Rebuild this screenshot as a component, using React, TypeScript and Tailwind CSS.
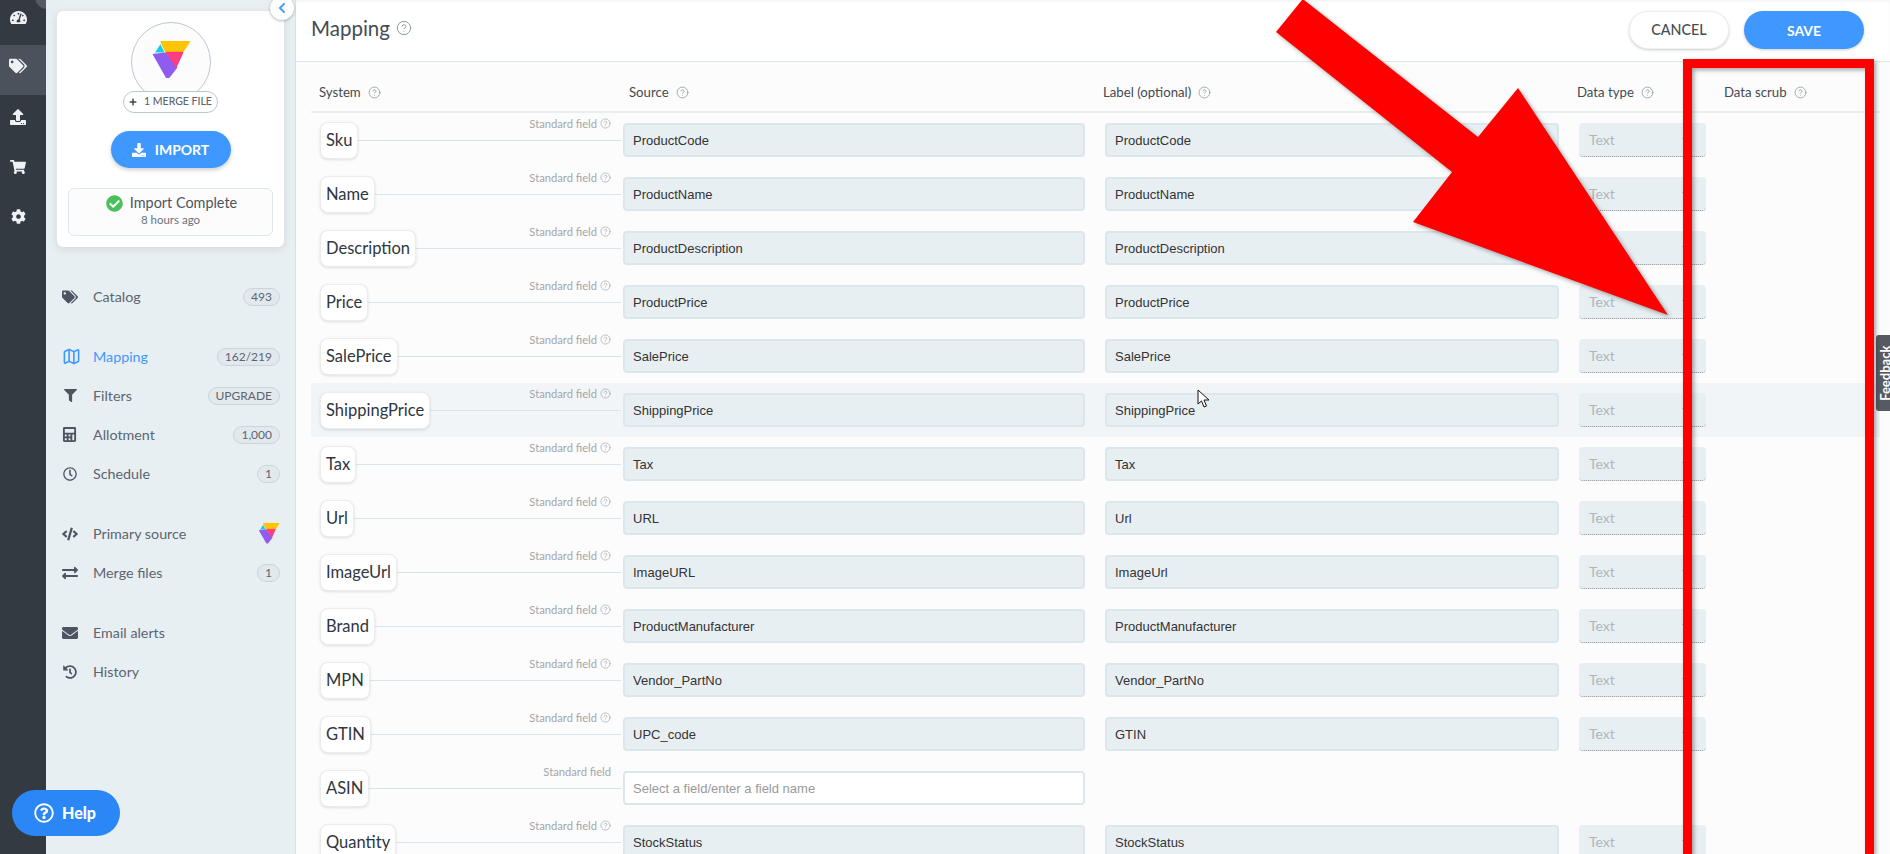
import { CircleHelp, Map as MapIcon } from 'lucide-react';
import {
    FaTachometerAlt, FaTags, FaUpload, FaShoppingCart, FaCog, FaFilter, FaCalculator,
    FaRegClock, FaCode, FaExchangeAlt, FaEnvelope, FaHistory, FaDownload, FaPlus,
    FaCheckCircle, FaChevronLeft, FaRegQuestionCircle,
} from 'react-icons/fa';
import type { ReactNode } from 'react';

const rows = [
    { system: 'Sku', source: 'ProductCode', label: 'ProductCode' },
    { system: 'Name', source: 'ProductName', label: 'ProductName' },
    { system: 'Description', source: 'ProductDescription', label: 'ProductDescription' },
    { system: 'Price', source: 'ProductPrice', label: 'ProductPrice' },
    { system: 'SalePrice', source: 'SalePrice', label: 'SalePrice' },
    { system: 'ShippingPrice', source: 'ShippingPrice', label: 'ShippingPrice', hover: true },
    { system: 'Tax', source: 'Tax', label: 'Tax' },
    { system: 'Url', source: 'URL', label: 'Url' },
    { system: 'ImageUrl', source: 'ImageURL', label: 'ImageUrl' },
    { system: 'Brand', source: 'ProductManufacturer', label: 'ProductManufacturer' },
    { system: 'MPN', source: 'Vendor_PartNo', label: 'Vendor_PartNo' },
    { system: 'GTIN', source: 'UPC_code', label: 'GTIN' },
    { system: 'ASIN' },
    { system: 'Quantity', source: 'StockStatus', label: 'StockStatus' },
];

const Logo = ({ className }: { className: string }) => (
    <svg viewBox="0 0 36 36" className={className}>
        <path d="M8 1 L34 1 L27 11 L13 11 Z" fill="#ffc400" stroke="#ffc400" strokeWidth="2" strokeLinejoin="round" />
        <path d="M7 3 L2 11 L11 11 Z" fill="#12cfe0" />
        <path d="M1 13 L12 12 L22 25 L15 34 L13 34 Z" fill="#8f5cf0" stroke="#8f5cf0" strokeWidth="2" strokeLinejoin="round" />
        <path d="M13 11 L28 11 L22 24 Z" fill="#ff3d7f" stroke="#ff3d7f" strokeWidth="1.5" strokeLinejoin="round" />
    </svg>
);

const NavItem = ({ icon, text, badge, active, className = '' }: { icon: ReactNode; text: string; badge?: ReactNode; active?: boolean; className?: string }) => (
    <div className={`flex h-[39px] items-center pl-[16px] pr-[15px] ${className}`}>
        <span className={`flex w-[31px] shrink-0 items-center ${active ? 'text-[#3f98ff]' : 'text-[#4d5562]'}`}>{icon}</span>
        <span className={`flex-1 text-[14.3px] ${active ? 'text-[#3f98ff]' : 'text-[#5c6570]'}`}>{text}</span>
        {badge}
    </div>
);

const Badge = ({ children }: { children: ReactNode }) => (
    <span className="flex h-[18px] items-center rounded-full border border-[#c9d5dd] bg-[#e2e9ee] px-[7px] text-[12px] text-[#5c6570]">{children}</span>
);

const ColHead = ({ text, className }: { text: string; className: string }) => (
    <div className={`flex items-center gap-[7px] text-[13.2px] text-[#444a52] ${className}`}>
        {text} <CircleHelp size={13} strokeWidth={1.5} className="text-[#8a9a9f]" />
    </div>
);

const Field = ({ text, className }: { text: string; className: string }) => (
    <div className={`flex h-[34px] items-center rounded-[4px] border-2 border-[#dce6ed] bg-[#e8eff3] pl-[8px] pt-[1px] font-['Liberation_Sans',sans-serif] text-[13px] text-[#333] ${className}`}>
        {text}
    </div>
);

const Row = ({ system, source, label, hover }: { system: string; source?: string; label?: string; hover?: boolean }) => (
    <div className={`flex h-[54px] items-center ${hover ? 'bg-[#f2f5f8]' : ''}`}>
        <div className="relative flex w-[312px] shrink-0 items-center pl-[9px] pr-[2px]">
            <span className="z-10 flex h-[37px] items-center rounded-[8px] border border-[#ececec] bg-white px-[5px] text-[16.5px] text-[#2f3640] shadow-[0_1px_3px_rgba(0,0,0,0.12)]">{system}</span>
            <span className="h-px flex-1 bg-[#d9e4ec]" />
            <span className="absolute right-[12px] top-[-6px] flex items-center gap-[3px] text-[11.2px] text-[#a3a6a9]">
                Standard field {source && <CircleHelp size={11} strokeWidth={1.5} />}
            </span>
        </div>
        {source ? (
            <Field text={source} className="w-[462px] shrink-0" />
        ) : (
            <div className="flex h-[34px] w-[462px] shrink-0 items-center rounded-[4px] border-2 border-[#dce6ed] bg-white pl-[8px] pt-[1px] font-['Liberation_Sans',sans-serif] text-[13px] text-[#999]">
                Select a field/enter a field name
            </div>
        )}
        {label && <Field text={label} className="ml-[20px] w-[454px] shrink-0" />}
        {label && (
            <div className="ml-[20px] flex h-[34px] w-[127px] shrink-0 items-center justify-between rounded-[4px] border-b border-dotted border-b-[#8a9298] bg-[#e8eff3] pl-[10px] pr-[18px] text-[14px] text-[#b0b5b9]">
                Text
                <span className="border-x-[3px] border-t-[4px] border-x-transparent border-t-[#9aa2a8]" />
            </div>
        )}
    </div>
);

export default function App() {
    return (
        <div className="relative flex h-screen overflow-hidden bg-[#fcfcfc] font-['Lato',sans-serif]">
            {/* Rail */}
            <div className="relative flex w-[46px] shrink-0 flex-col bg-[#343a42] text-[#eef2f5]">
                <span className="absolute left-[35px] top-[-15px] h-[24px] w-[24px] rounded-full bg-[#565b63]" />
                <div className="-mt-[5px] flex h-[50px] items-center justify-center pb-[6px] pr-[10px]"><FaTachometerAlt size={17} /></div>
                <div className="flex h-[50px] items-center justify-center bg-[#4b525c] pb-[8px] pr-[10px]"><FaTags size={18} /></div>
                <div className="flex h-[50px] items-center justify-center pb-[7px] pr-[10px]"><FaUpload size={16} /></div>
                <div className="flex h-[50px] items-center justify-center pb-[7px] pr-[10px]"><FaShoppingCart size={16} /></div>
                <div className="flex h-[50px] items-center justify-center pb-[7px] pr-[10px]"><FaCog size={15} /></div>
            </div>

            {/* Sidebar */}
            <div className="relative flex w-[250px] shrink-0 flex-col border-r border-[#d5e0e8] bg-[#e8eff3]">
                <button className="absolute left-[224px] top-[-4px] z-10 flex h-[24px] w-[24px] items-center justify-center rounded-full bg-white text-[#3f98ff] shadow-[0_1px_3px_rgba(0,0,0,0.3)]">
                    <FaChevronLeft size={12} />
                </button>
                <div className="ml-[11px] mt-[11px] flex h-[236px] w-[227px] flex-col items-center rounded-[6px] bg-white pt-[11px] shadow-[0_2px_8px_rgba(0,0,0,0.1)]">
                    <div className="flex h-[80px] w-[80px] items-center justify-center rounded-full border border-[#bcc7d3] bg-[#fcfcfc] pb-[4px] pl-[2px]">
                        <Logo className="h-[38px] w-[38px]" />
                    </div>
                    <div className="z-10 -mt-[11px] flex h-[22px] w-[95px] items-center justify-center gap-[7px] rounded-full border border-[#bcc7d3] bg-white text-[10.5px] font-medium text-[#5c6570]">
                        <FaPlus size={8} className="text-[#3e4650]" /> 1 MERGE FILE
                    </div>
                    <button className="mt-[18px] flex h-[37px] w-[120px] items-center justify-center gap-[9px] rounded-full bg-[#3f98ff] text-[14px] font-bold text-white shadow-[0_2px_4px_rgba(0,0,0,0.2)]">
                        <FaDownload size={14} /> IMPORT
                    </button>
                    <div className="mt-[20px] flex h-[48px] w-[205px] flex-col items-center justify-center rounded-[6px] border border-[#dde6ec] bg-[#fcfcfc]">
                        <div className="-mt-[2px] flex items-center gap-[7px] pl-[2px] text-[14.4px] leading-[18px] text-[#4d5562]">
                            <FaCheckCircle size={17} className="text-[#47c15a]" /> Import Complete
                        </div>
                        <div className="text-[11.5px] leading-[16px] text-[#6a727c]">8 hours ago</div>
                    </div>
                </div>

                <NavItem className="mt-[30px]" icon={<FaTags size={16} />} text="Catalog" badge={<Badge>493</Badge>} />
                <NavItem className="mt-[21px]" active icon={<MapIcon size={19} />} text="Mapping" badge={<Badge>162/219</Badge>} />
                <NavItem icon={<FaFilter size={13} className="ml-[2px]" />} text="Filters" badge={<Badge>UPGRADE</Badge>} />
                <NavItem icon={<FaCalculator size={15} />} text="Allotment" badge={<Badge>1,000</Badge>} />
                <NavItem icon={<FaRegClock size={14} className="ml-[1px]" />} text="Schedule" badge={<Badge>1</Badge>} />
                <NavItem className="mt-[21px]" icon={<FaCode size={16} />} text="Primary source" badge={<Logo className="h-[21px] w-[21px]" />} />
                <NavItem icon={<FaExchangeAlt size={16} />} text="Merge files" badge={<Badge>1</Badge>} />
                <NavItem className="mt-[21px]" icon={<FaEnvelope size={16} />} text="Email alerts" />
                <NavItem icon={<FaHistory size={14} className="ml-[1px]" />} text="History" />
            </div>

            {/* Main */}
            <div className="flex min-w-0 flex-1 flex-col">
                <div className="flex h-[62px] shrink-0 items-center justify-between border-b border-[#dfe8ee] bg-white pb-[1px] pl-[15px] pr-[26px] shadow-[inset_0_2px_2px_rgba(0,0,0,0.04)]">
                    <div className="-mt-[4px] flex items-center gap-[6px] text-[20.5px] text-[#454c55]">
                        Mapping <CircleHelp size={16} strokeWidth={1.5} className="text-[#8a9a9f]" />
                    </div>
                    <div className="flex items-center gap-[15px]">
                        <button className="h-[38px] w-[100px] rounded-full border border-[#f0f0f0] bg-white text-[14.3px] font-medium text-[#454c55] shadow-[0_1px_3px_rgba(0,0,0,0.2)]">CANCEL</button>
                        <button className="h-[38px] w-[120px] rounded-full bg-[#3f98ff] text-[14px] font-bold text-white shadow-[0_1px_3px_rgba(0,0,0,0.2)]">SAVE</button>
                    </div>
                </div>
                <div className="ml-[15px] mr-[10px]">
                    <div className="flex h-[51px] items-center border-b-2 border-[#e8eff3] pl-[8px] pt-[12px]">
                        <ColHead text="System" className="w-[310px]" />
                        <ColHead text="Source" className="w-[474px]" />
                        <ColHead text="Label (optional)" className="w-[474px]" />
                        <ColHead text="Data type" className="w-[147px]" />
                        <ColHead text="Data scrub" className="w-[120px]" />
                    </div>
                    {rows.map(r => <Row key={r.system} {...r} />)}
                </div>
            </div>

            {/* Feedback tab */}
            <div className="absolute right-0 top-[335px] flex h-[76px] w-[14px] items-center justify-center overflow-hidden rounded-l-[3px] bg-[#565b63]">
                <span className="shrink-0 -rotate-90 pt-[7px] text-[13px] font-bold text-white">Feedback</span>
            </div>

            {/* Help */}
            <button className="absolute left-[12px] top-[790px] flex h-[46px] w-[108px] items-center gap-[8px] rounded-full bg-[#2a87f5] pl-[22px] text-[16px] font-black text-white">
                <FaRegQuestionCircle size={20} /> Help
            </button>

            {/* Annotation */}
            <svg className="pointer-events-none absolute left-0 top-0 h-[854px] w-[1890px] drop-shadow-[2px_2px_2px_rgba(0,0,0,0.35)]" viewBox="0 0 1890 854">
                <polygon points="1302,0 1276,32 1452,172 1413,222 1668,315 1518,88 1478,137 1304,0" fill="#ff0000" />
                <path d="M1683 59 H1874 V900 H1683 Z M1692 68 V900 H1865 V68 Z" fill="#ff0000" fillRule="evenodd" />
            </svg>

            {/* Mouse pointer */}
            <svg className="pointer-events-none absolute left-[1197px] top-[389px] h-[20px] w-[13px]" viewBox="0 0 13 20">
                <path d="M1 1 L1 15 L4.5 12 L7 18 L9.5 17 L7 11 L12 11 Z" fill="#fff" stroke="#111" strokeWidth="1" strokeLinejoin="round" />
            </svg>
        </div>
    );
}
